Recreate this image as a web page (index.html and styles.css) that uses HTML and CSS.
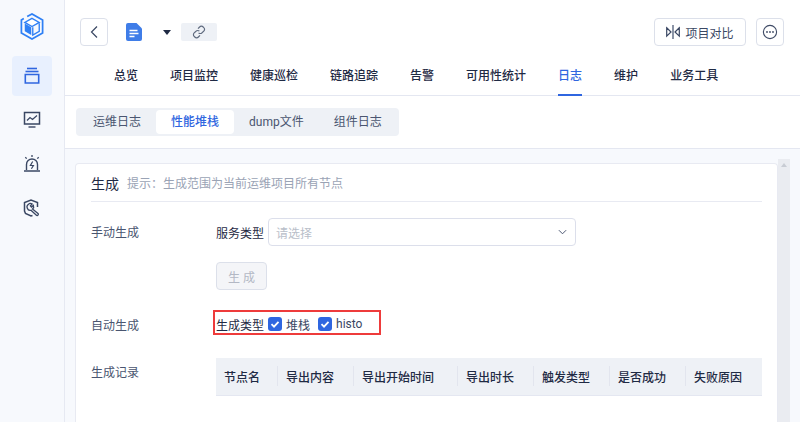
FILE: index.html
```html
<!DOCTYPE html>
<html lang="zh-CN">
<head>
    <meta charset="UTF-8">
    <title>性能堆栈</title>
    <link rel="stylesheet" href="styles.css">
</head>
<body>
    <aside class="sidebar">
        <svg class="logo" width="26" height="27" viewBox="0 0 26 28" fill="none">
            <path d="M8 3.6 13 1l11 6.3v13.4L13 27 2 20.7V7.3l2.5-1.500" stroke="#2f80f5" stroke-width="1.8"/>
            <path d="M13 5.5 20.5 9.8 13 14 5.5 9.8z" fill="#fff" stroke="#2f80f5" stroke-width="1.4"/>
            <path d="M5.5 11l6.7 3.8v8L5.5 19z" fill="#2f80f5"/>
            <path d="M20.5 10.5V19l-6.7 3.8v-8" stroke="#2f80f5" stroke-width="1.4"/>
        </svg>
        <a class="side-item active">
            <svg width="18" height="18" viewBox="0 0 18 18" fill="none">
                <path d="M4 1.5h10" stroke="#2f66e0" stroke-width="1.6"/>
                <path d="M2.5 4.5h13" stroke="#2f66e0" stroke-width="1.6"/>
                <path d="M1.5 7.5h15M2.3 7.5v8.5h13.4V7.5" stroke="#2f66e0" stroke-width="1.6"/>
            </svg>
        </a>
        <a class="side-item">
            <svg width="18" height="18" viewBox="0 0 18 18" fill="none">
                <path d="M1.5 1.5h15V13h-15z" stroke="#3a4763" stroke-width="1.5"/>
                <path d="M4 9.5l3-3 2.5 2 4.500-4" stroke="#3a4763" stroke-width="1.3"/>
                <path d="M5.5 16h7" stroke="#3a4763" stroke-width="1.4"/>
            </svg>
        </a>
        <a class="side-item">
            <svg width="18" height="18" viewBox="0 0 18 18" fill="none">
                <path d="M3.5 15V9.5a5.500 5.500 0 0 1 11 0V15" stroke="#3a4763" stroke-width="1.4"/>
                <path d="M1 16h16" stroke="#3a4763" stroke-width="1.5"/>
                <path d="M9.7 6.5 7.4 10.500h3l-2 3.200" stroke="#3a4763" stroke-width="1.2"/>
                <path d="M9 0v2M2.3 2.2l1.4 1.4M15.7 2.2l-1.4 1.4" stroke="#3a4763" stroke-width="1.3"/>
            </svg>
        </a>
        <a class="side-item">
            <svg width="18" height="18" viewBox="0 0 18 18" fill="none">
                <path d="M9.5 16.5 8 17 2.5 14.5 1.5 12V3.5L8 1l6.5 2.5V8" stroke="#3a4763" stroke-width="1.5"/>
                <path d="M5.2 5.6a3.1 3.1 0 0 1 4-.6L7.4 6.9l1 1.2 2-1.7a3 3 0 0 1-.9 3.5l5.5 4.6a1 1 0 0 1-.1 1.6 1 1 0 0 1-1.5.2L8 11.3a3.2 3.2 0 0 1-3.7-2.1 3 3 0 0 1 .9-3.6z" stroke="#3a4763" stroke-width="1.3"/>
            </svg>
        </a>
    </aside>

    <div class="main">
        <header class="topbar">
            <div class="title-row">
                <button class="icon-btn">
                    <svg width="10" height="14" viewBox="0 0 10 14" fill="none"><path d="M8 1.5 2.5 7 8 12.5" stroke="#3a4763" stroke-width="1.2"/></svg>
                </button>
                <svg class="doc-icon" width="16" height="18" viewBox="0 0 16 18">
                    <path d="M2 0h8.5L16 5.5V16a2 2 0 0 1-2 2H2a2 2 0 0 1-2-2V2a2 2 0 0 1 2-2z" fill="#3f7de8"/>
                    <path d="M3.500 7.500h8M3.500 10.500h9M3.500 13.500h5" stroke="#fff" stroke-width="1.3"/>
                </svg>
                <span class="caret"></span>
                <span class="link-chip">
                    <svg width="14" height="14" viewBox="0 0 14 14" fill="none">
                        <path d="M6 3.6 7.6 2a2.4 2.4 0 0 1 3.6 0l.6.6a2.4 2.4 0 0 1 0 3.5L10 7.8a2.4 2.4 0 0 1-3.4 0" stroke="#5f6a7e" stroke-width="1.2"/>
                        <path d="M8 10.4 6.4 12a2.4 2.4 0 0 1-3.6 0l-.6-.6a2.4 2.4 0 0 1 0-3.5L4 6.2a2.4 2.4 0 0 1 3.4 0" stroke="#5f6a7e" stroke-width="1.2"/>
                    </svg>
                </span>
                <div class="title-actions">
                    <button class="compare-btn">
                        <svg width="14" height="14" viewBox="0 0 14 14" fill="none">
                            <path d="M7 0v14" stroke="#5b6780" stroke-width="1.4"/>
                            <path d="M.7 2.8 5 7 .7 11.2zM13.3 2.8 9 7l4.3 4.2z" stroke="#3a4763" stroke-width="1.2"/>
                        </svg>
                        项目对比
                    </button>
                    <button class="icon-btn">
                        <svg width="16" height="16" viewBox="0 0 16 16" fill="none">
                            <circle cx="8" cy="8" r="6.6" stroke="#3f4b66" stroke-width="1.1"/>
                            <circle cx="5" cy="8" r=".9" fill="#3f4b66"/>
                            <circle cx="8" cy="8" r=".9" fill="#3f4b66"/>
                            <circle cx="11" cy="8" r=".9" fill="#3f4b66"/>
                        </svg>
                    </button>
                </div>
            </div>
            <nav class="nav-tabs">
                <a>总览</a>
                <a>项目监控</a>
                <a>健康巡检</a>
                <a>链路追踪</a>
                <a>告警</a>
                <a>可用性统计</a>
                <a class="active">日志</a>
                <a>维护</a>
                <a>业务工具</a>
            </nav>
        </header>

        <div class="sub-bar">
            <div class="segments">
                <a>运维日志</a>
                <a class="active">性能堆栈</a>
                <a>dump文件</a>
                <a>组件日志</a>
            </div>
        </div>

        <div class="scroll-area">
            <section class="card">
                <div class="card-head">
                    <h2>生成</h2>
                    <span class="hint">提示：生成范围为当前运维项目所有节点</span>
                </div>

                <div class="form-row manual">
                    <div class="row-label">手动生成</div>
                    <div class="row-body">
                        <div class="field">
                            <label>服务类型</label>
                            <div class="select">
                                <span>请选择</span>
                                <svg width="9" height="6" viewBox="0 0 10 6" fill="none"><path d="M1 1l4 4 4-4" stroke="#4a5570" stroke-width="1.1"/></svg>
                            </div>
                        </div>
                        <button class="gen-btn" disabled>生 成</button>
                    </div>
                </div>

                <div class="form-row auto">
                    <div class="row-label">自动生成</div>
                    <div class="row-body">
                        <div class="highlight">
                            <label>生成类型</label>
                            <span class="check">
                                <svg width="14" height="14" viewBox="0 0 14 14" fill="none"><path d="M3.5 7.2 6 9.6l4.5-4.8" stroke="#fff" stroke-width="1.8"/></svg>
                            </span>
                            <span class="check-text">堆栈</span>
                            <span class="check second">
                                <svg width="14" height="14" viewBox="0 0 14 14" fill="none"><path d="M3.5 7.2 6 9.6l4.5-4.8" stroke="#fff" stroke-width="1.8"/></svg>
                            </span>
                            <span class="check-text">histo</span>
                        </div>
                    </div>
                </div>

                <div class="form-row records">
                    <div class="row-label">生成记录</div>
                    <div class="row-body">
                        <table class="record-table">
                            <colgroup>
                                <col class="col-name">
                                <col class="col-mid">
                                <col class="col-time">
                                <col class="col-mid">
                                <col class="col-mid">
                                <col class="col-mid">
                                <col class="col-mid">
                            </colgroup>
                            <thead>
                                <tr>
                                    <th>节点名</th>
                                    <th>导出内容</th>
                                    <th>导出开始时间</th>
                                    <th>导出时长</th>
                                    <th>触发类型</th>
                                    <th>是否成功</th>
                                    <th>失败原因</th>
                                </tr>
                            </thead>
                        </table>
                    </div>
                </div>
            </section>
            <div class="scrollbar"><span class="scroll-up"></span></div>
        </div>
    </div>
</body>
</html>
```
FILE: styles.css
```css
*, *::before, *::after {
    margin: 0;
    padding: 0;
    box-sizing: border-box;
    font-family: Roboto, "Noto Sans CJK SC", sans-serif;
}

html, body {
    height: 100%;
    overflow: hidden;
}

body {
    display: flex;
    background: #f7f9fd;
    font-size: 12px;
    color: #3a4763;
}

button {
    background: #fff;
    cursor: pointer;
    font-size: 12px;
    color: #3a4763;
}

/* left rail */
.sidebar {
    width: 65px;
    flex-shrink: 0;
    border-right: 1px solid #e6e9f2;
    display: flex;
    flex-direction: column;
    align-items: center;
    padding-top: 13px;
}

.logo {
    margin-bottom: 16px;
}

.side-item {
    width: 40px;
    height: 40px;
    margin-bottom: 4px;
    border-radius: 4px;
    display: flex;
    align-items: center;
    justify-content: center;
}

.side-item.active {
    background: #e8f0fe;
}

.main {
    flex: 1;
    min-width: 0;
    display: flex;
    flex-direction: column;
}

/* header */
.topbar {
    height: 96px;
    flex-shrink: 0;
    background: #fff;
    border-bottom: 1px solid #e4e7f1;
}

.title-row {
    display: flex;
    align-items: center;
    height: 28px;
    margin-top: 18px;
    padding: 0 16px 0 15px;
}

.icon-btn {
    width: 28px;
    height: 28px;
    border: 1px solid #dce0ea;
    border-radius: 4px;
    display: flex;
    align-items: center;
    justify-content: center;
}

.doc-icon {
    margin-left: 18px;
}

.caret {
    margin-left: 21px;
    border-top: 5px solid #1f2a44;
    border-left: 4.5px solid transparent;
    border-right: 4.5px solid transparent;
}

.link-chip {
    width: 36px;
    height: 18px;
    margin-left: 10px;
    border-radius: 2px;
    background: #eef1f6;
    display: flex;
    align-items: center;
    justify-content: center;
}

.title-actions {
    margin-left: auto;
    display: flex;
    gap: 10px;
}

.compare-btn {
    width: 92px;
    height: 28px;
    border: 1px solid #dce0ea;
    border-radius: 4px;
    display: flex;
    align-items: center;
    justify-content: center;
    gap: 5px;
}

.nav-tabs {
    display: flex;
    gap: 32px;
    height: 50px;
    padding-left: 49px;
}

.nav-tabs a {
    line-height: 60px;
    height: 50px;
    font-weight: 500;
    color: #1f2a44;
}

.nav-tabs a.active {
    color: #2f66e0;
    border-bottom: 2px solid #2f66e0;
}

/* segmented tabs */
.sub-bar {
    height: 53px;
    flex-shrink: 0;
    background: #fff;
    border-bottom: 1px solid #e4e7f1;
    padding: 12px 0 0 11px;
}

.segments {
    display: inline-flex;
    height: 28px;
    padding: 2px;
    background: #eef1f6;
    border-radius: 4px;
}

.segments a {
    padding: 0 15px;
    line-height: 24px;
    border-radius: 4px;
    color: #4a5570;
}

.segments a.active {
    background: #fff;
    color: #2f66e0;
    font-weight: 500;
}

/* card */
.scroll-area {
    flex: 1;
    min-height: 0;
    display: flex;
    margin: 10px 10px 0;
}

.card {
    flex: 1;
    min-width: 0;
    margin-top: 4px;
    padding: 0 15px;
    background: #fff;
    border: 1px solid #e8eaf2;
    border-bottom: none;
    border-radius: 4px 4px 0 0;
}

.scrollbar {
    width: 12px;
    flex-shrink: 0;
    background: #eaecf1;
    display: flex;
    justify-content: center;
    padding-top: 4px;
}

.scroll-up {
    height: 4px;
    border-bottom: 4px solid #c8ccd4;
    border-left: 3.5px solid transparent;
    border-right: 3.5px solid transparent;
}

.card-head {
    height: 38px;
    display: flex;
    align-items: center;
    gap: 8px;
    border-bottom: 1px solid #e8eaf2;
}

.card-head h2 {
    font-size: 14px;
    font-weight: 400;
    color: #1f2a44;
}

.hint {
    color: #9aa3b5;
}

.form-row {
    display: flex;
}

.row-label {
    width: 125px;
    flex-shrink: 0;
    color: #4a5570;
}

.manual {
    margin-top: 16px;
}

.manual .row-label {
    line-height: 30px;
}

.field {
    display: flex;
    align-items: center;
    gap: 4px;
}

.field label, .highlight label {
    color: #1f2a44;
}

.select {
    width: 308px;
    height: 28px;
    padding: 0 8px 0 7px;
    border: 1px solid #dcdfeb;
    border-radius: 4px;
    display: flex;
    align-items: center;
    justify-content: space-between;
    color: #b8bec9;
}

.gen-btn {
    display: block;
    width: 51px;
    height: 28px;
    margin-top: 16px;
    background: #f4f5f8;
    border: 1px solid #dce0ea;
    border-radius: 4px;
    color: #b3b8c4;
}

.auto {
    margin-top: 25px;
    align-items: center;
}

/* red callout from the screenshot */
.highlight {
    position: relative;
    display: flex;
    align-items: center;
    height: 18px;
}

.highlight::before {
    content: "";
    position: absolute;
    left: -3px;
    top: -5px;
    width: 168px;
    height: 25px;
    border: 2px solid #ee3b3b;
}

.check {
    width: 14px;
    height: 14px;
    margin: 0 4px;
    background: #2f66e0;
    border-radius: 3px;
    display: flex;
}

.check.second {
    margin-left: 8px;
}

.check-text {
    color: #3a4763;
}

.records {
    margin-top: 25px;
}

.records .row-label {
    line-height: 30px;
}

.record-table {
    width: 546px;
    table-layout: fixed;
    border-collapse: collapse;
}

.col-name {
    width: 62px;
}

.col-mid {
    width: 76px;
}

.col-time {
    width: 104px;
}

.record-table th {
    position: relative;
    height: 37px;
    padding-left: 8px;
    background: #eef1f6;
    border-bottom: 1px solid #e4e7f1;
    text-align: left;
    font-weight: 500;
    color: #1f2a44;
    white-space: nowrap;
}

.record-table th:not(:last-child)::after {
    content: "";
    position: absolute;
    right: 0;
    top: 8px;
    height: 20px;
    border-right: 1px solid #e2e5ee;
}
```
